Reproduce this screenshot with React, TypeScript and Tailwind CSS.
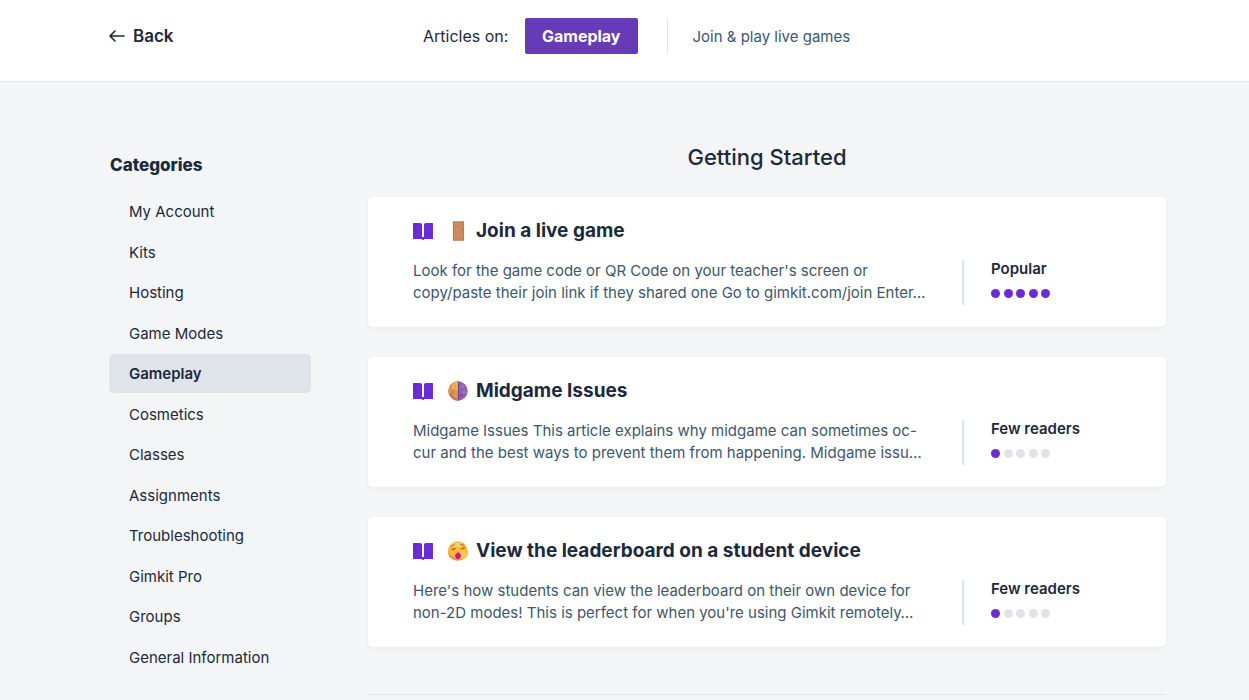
import type { ReactNode } from 'react';

const categories = [
  'My Account',
  'Kits',
  'Hosting',
  'Game Modes',
  'Gameplay',
  'Cosmetics',
  'Classes',
  'Assignments',
  'Troubleshooting',
  'Gimkit Pro',
  'Groups',
  'General Information',
];

type Article = {
  title: string;
  icon: ReactNode;
  lines: [string, string];
  popularity: string;
  score: number;
};

function ArrowIcon() {
  return (
    <svg width="16" height="14" viewBox="0 0 16 14" fill="none" stroke="#1c293b" strokeWidth="1.6" strokeLinecap="round" strokeLinejoin="round" aria-hidden="true">
      <path d="M15 7H1M6 2L1 7L6 12" />
    </svg>
  );
}

function BookIcon() {
  return (
    <svg width="20" height="19" viewBox="0 -2 20 19" fill="#6a2ad5" aria-hidden="true">
      <path d="M0.4 0H7C8.2 0 9 0.8 9 2V14H11V2C11 0.8 11.8 0 13 0H19.6Q20 0 20 0.4V15.6Q20 16 19.6 16H11.4Q11 17 10 17T8.6 16H0.4Q0 16 0 15.6V0.4Q0 0 0.4 0Z" />
    </svg>
  );
}

function DoorIcon() {
  return (
    <svg width="20" height="20" viewBox="0 0 20 20" aria-hidden="true">
      <rect x="5" y="0.5" width="11" height="19" fill="#cd8a5e" />
      <path d="M5.4 0.5V19.5M15.6 0.5V19.5M5 1H16M5 19.2H16" stroke="#b97546" strokeWidth="0.8" />
      <path d="M7 2.5H14V7H7ZM7 10H14V12H7ZM7 15H14V17.5H7Z" fill="#c58a6c" />
      <path d="M6 8.5H15M6 14H15" stroke="#e0954f" strokeWidth="0.8" />
      <circle cx="13.8" cy="9" r="0.8" fill="#b8632c" />
    </svg>
  );
}

function MoonIcon() {
  return (
    <svg width="20" height="20" viewBox="0 0 20 20" aria-hidden="true">
      <circle cx="10" cy="10" r="9.7" fill="#8f5fb3" />
      <path d="M10 0.3A9.7 9.7 0 0 0 10 19.7Z" fill="#df954c" />
      <path d="M10 0.3V9C7.5 11 7 5 4 9C3 7 4 3.5 6 1.7Q8 0.4 10 0.3Z" fill="#f2b64f" />
      <path d="M1 12Q4 11 5 14T9 17V19.6Q3 19 1 12Z" fill="#c87850" />
      <path d="M10.4 0.3V19.7" stroke="#67418c" strokeWidth="0.9" />
      <circle cx="14.5" cy="5.5" r="2" fill="#9d70c1" />
      <circle cx="16" cy="11" r="1.6" fill="#a479c4" />
      <circle cx="13" cy="14.5" r="1.8" fill="#7d4f9c" />
      <circle cx="5" cy="11" r="1.2" fill="#c27c47" />
      <circle cx="7.5" cy="5" r="1" fill="#db963d" />
    </svg>
  );
}

function YawnIcon() {
  return (
    <svg width="22" height="20" viewBox="0 0 22 20" aria-hidden="true">
      <path d="M11 0.5C16 0.5 19.6 3.5 20.2 8C22 11 21.4 16 17.5 17.6C14 20 7.5 20 4.4 17.4C1 15 0.2 10.5 1.6 7C3 3 6.5 0.5 11 0.5Z" fill="#f7b940" />
      <path d="M1.2 9Q2 14.5 7 16.5Q11 19 17 17.8Q13 20 8 19.2Q1 17.5 1.2 9Z" fill="#ea9040" />
      <ellipse cx="10" cy="4" rx="5" ry="2.2" fill="#fbd065" />
      <path d="M4.4 5.4L7.6 3.6M13.4 3.4L16.8 4.4" stroke="#b06a30" strokeWidth="1" fill="none" strokeLinecap="round" />
      <path d="M5 8.8L8 7.6M14.6 7.8L17.6 6.8" stroke="#95592b" strokeWidth="1.2" fill="none" strokeLinecap="round" />
      <path d="M11 11.6L13.8 14.2L12.4 17.4H9.6L8.2 14.2Z" fill="#c81c74" stroke="#c81c74" strokeLinejoin="round" />
      <path d="M13.5 11Q17.5 8.5 20 12Q20.5 16.5 16 17.6Q15 14 13.5 11Z" fill="#f9c75a" />
    </svg>
  );
}

const articles: Article[] = [
  {
    title: 'Join a live game',
    icon: <DoorIcon />,
    lines: [
      "Look for the game code or QR Code on your teacher's screen or",
      'copy/paste their join link if they shared one Go to gimkit.com/join Enter…',
    ],
    popularity: 'Popular',
    score: 5,
  },
  {
    title: 'Midgame Issues',
    icon: <MoonIcon />,
    lines: [
      'Midgame Issues This article explains why midgame can sometimes oc-',
      'cur and the best ways to prevent them from happening. Midgame issu…',
    ],
    popularity: 'Few readers',
    score: 1,
  },
  {
    title: 'View the leaderboard on a student device',
    icon: <YawnIcon />,
    lines: [
      "Here's how students can view the leaderboard on their own device for",
      "non-2D modes! This is perfect for when you're using Gimkit remotely…",
    ],
    popularity: 'Few readers',
    score: 1,
  },
];

function ArticleCard({ title, icon, lines, popularity, score }: Article) {
  return (
    <a href="#" className="block rounded-[5px] bg-white pt-5 pr-11 pb-[22px] pl-[45px] shadow-[0_2px_4px_rgba(0,0,0,0.04)]">
      <h3 className="flex items-center text-[19px] leading-[27px] font-bold text-[#1c293b]">
        <BookIcon />
        <span className="ml-3.5 flex w-[22px] justify-center">{icon}</span>
        <span className="ml-[7px]">{title}</span>
      </h3>
      <div className="mt-4 flex justify-between">
        <p className="text-[15px] leading-[22px] whitespace-nowrap text-[#40566d]">
          {lines[0]}
          <br />
          {lines[1]}
        </p>
        <div className="h-[45px] w-[160px] shrink-0 border-l-2 border-[#e0e4ec] pl-[27px]">
          <div className="text-[15px] leading-[18px] font-semibold text-[#1c293b]">{popularity}</div>
          <div className="mt-[11px] flex w-[59px] justify-between" role="img" aria-label={`${score} out of 5`}>
            {[1, 2, 3, 4, 5].map((n) => (
              <span key={n} className={`size-[9px] rounded-full ${n <= score ? 'bg-[#6a2ad5]' : 'bg-[#e0e4ea]'}`} />
            ))}
          </div>
        </div>
      </div>
    </a>
  );
}

export default function App() {
  return (
    <div className="min-h-screen bg-[#f3f5f7] font-['Inter',sans-serif] text-[#1c293b]">
      <header className="border-b border-[#e2e5e9] bg-white pt-[18px] pr-[83px] pb-[27px] pl-[109px]">
        <div className="flex h-9 items-center">
          <a href="#" className="flex w-[314px] items-center gap-2 text-[17px] leading-[38px] font-semibold">
            <ArrowIcon />
            Back
          </a>
          <span className="w-[102px] text-[16px]">Articles on:</span>
          <a href="#" className="rounded-[2px] bg-[#673ab7] px-[17px] text-[16px] leading-9 font-bold text-white">
            Gameplay
          </a>
          <p className="ml-[29px] h-9 border-l border-[#e2e5e9] pl-[25px] text-[15px] leading-[38px] text-[#40566d]">Join &amp; play live games</p>
        </div>
      </header>
      <div className="flex gap-[57px] pr-[83px] pl-[109px]">
        <nav className="w-[202px] shrink-0 pt-[71px]" aria-label="Categories">
          <h2 className="pl-px text-[17px] leading-6 font-extrabold">Categories</h2>
          <ul className="mt-[15px]">
            {categories.map((name) => (
              <li key={name} className="odd:mb-0.5 even:mb-px">
                <a
                  href="#"
                  className={`block rounded-[5px] px-5 text-[15px] leading-[39px] ${name === 'Gameplay' ? 'bg-[#dfe4eb] font-semibold' : ''}`}
                >
                  {name}
                </a>
              </li>
            ))}
          </ul>
        </nav>
        <main className="min-w-0 flex-1 pt-[60px]">
          <h2 className="text-center text-[22px] leading-[30px] font-medium">Getting Started</h2>
          <div className="mt-[25px] flex flex-col gap-[30px]">
            {articles.map((article) => (
              <ArticleCard key={article.title} {...article} />
            ))}
          </div>
          <hr className="mt-[47px] border-[#dfe3e8]" />
        </main>
      </div>
    </div>
  );
}
